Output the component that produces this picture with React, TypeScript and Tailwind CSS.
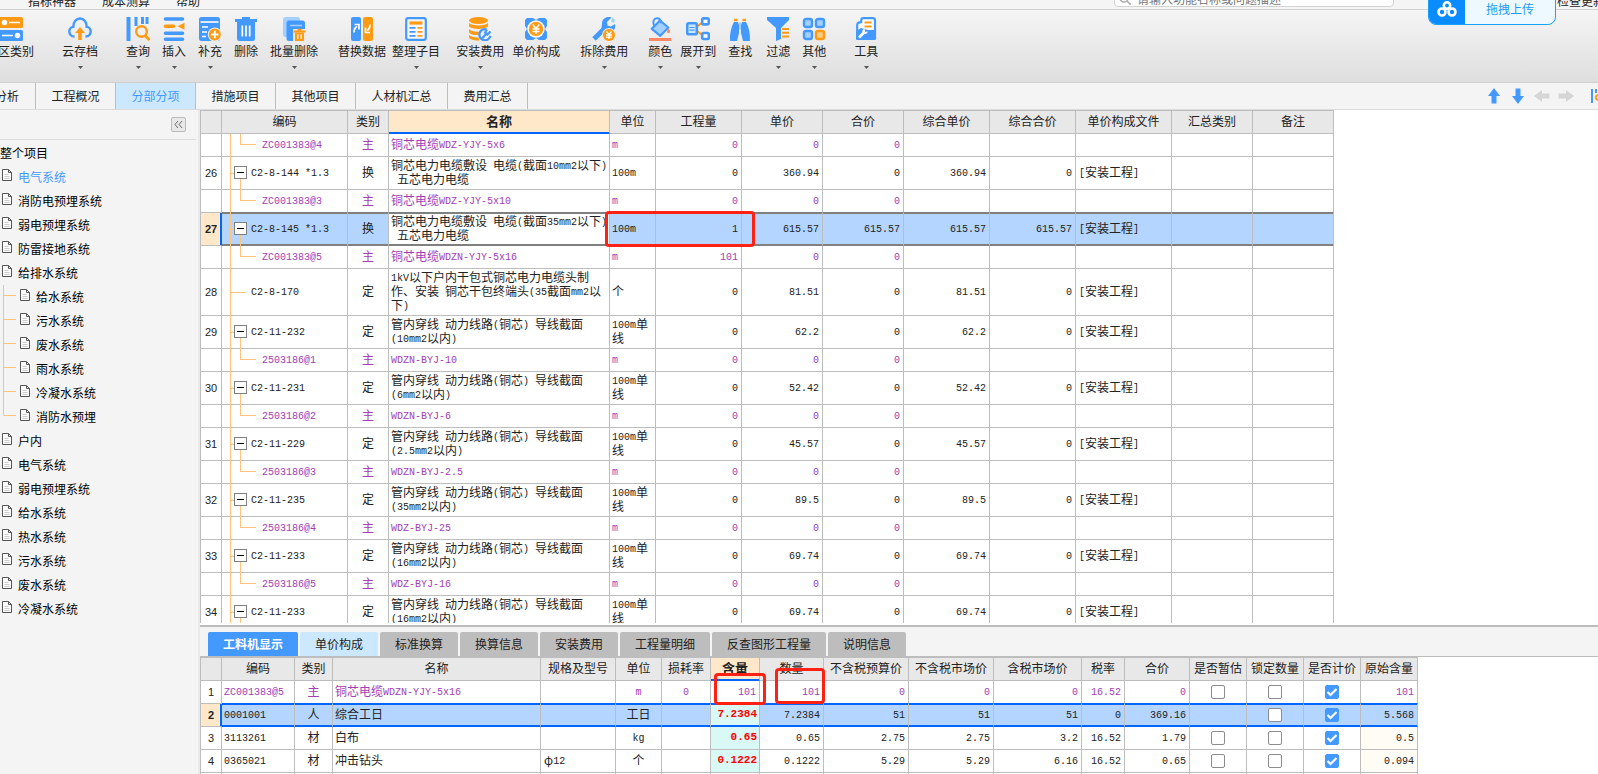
import { ReactNode } from "react"
import clsx from "clsx"

const BLUE = "#4499ff"
const ORANGE = "#ff9a14"

const icons: Record<string, ReactNode> = {
    category: (
        <>
            <rect x="0" y="0" width="24" height="11" rx="1.5" fill={ORANGE} />
            <rect x="0" y="13" width="24" height="11" rx="1.5" fill={BLUE} />
            <circle cx="5.5" cy="5.5" r="2.7" fill="#fff" />
            <circle cx="18.5" cy="18.5" r="2.7" fill="#fff" />
            <path d="M10 5.5h11M3 18.5h11" stroke="#fff" strokeWidth="1.6" />
        </>
    ),
    cloud: (
        <>
            <path d="M6.5 19.5C3 19.5 1.3 17 1.3 14.6c0-2.600 1.900-4.500 4-4.700C5.300 5 8.300 1.500 12 1.500s6.700 3.500 6.700 8.400c2.100.2 4 2.100 4 4.700 0 2.400-1.700 4.900-5.200 4.900" fill="none" stroke={BLUE} strokeWidth="2.400" />
            <path d="M12 10l5 6h-3.200v7h-3.600v-7H7z" fill={ORANGE} />
        </>
    ),
    query: (
        <>
            <path d="M2.500 0v24" stroke={BLUE} strokeWidth="4" />
            <path d="M10 0v9M16.500 0v7M21 0v7" stroke={BLUE} strokeWidth="3" />
            <circle cx="15.500" cy="14.500" r="5.300" fill="#f0f0f0" stroke={ORANGE} strokeWidth="2.400" />
            <path d="M19 18.500l4.500 4.500" stroke={ORANGE} strokeWidth="2.800" />
        </>
    ),
    insert: (
        <>
            <path d="M3.500 2h17M3.500 16.200h17M3.500 22.200h17" stroke={BLUE} strokeWidth="3.600" strokeLinecap="round" />
            <path d="M3.500 9.200h8" stroke={ORANGE} strokeWidth="3.600" strokeLinecap="round" />
            <path d="M22.500 5.700v7l-7-3.500z" fill={ORANGE} />
        </>
    ),
    supply: (
        <>
            <rect x="1" y="0" width="21" height="24" rx="2.500" fill={BLUE} />
            <path d="M2.500 5h18" stroke="#fff" strokeWidth="1.600" />
            <path d="M4 10h6M4 15h5M4 19.500h4" stroke="#fff" strokeWidth="1.600" />
            <circle cx="16.800" cy="17.500" r="7" fill="#ededed" />
            <circle cx="16.800" cy="17.500" r="6" fill={ORANGE} />
            <path d="M16.800 13.800v7.400M13.100 17.500h7.400" stroke="#fff" strokeWidth="1.900" />
        </>
    ),
    trash: (
        <>
            <path d="M1 3.500h22M8 1.200h8" stroke={BLUE} strokeWidth="2.800" />
            <path d="M3 5h18v16.500a2.500 2.500 0 0 1-2.500 2.500h-13A2.500 2.500 0 0 1 3 21.500z" fill={BLUE} />
            <path d="M8.300 8.500v11M12 8.500v11M15.700 8.500v11" stroke="#fff" strokeWidth="1.700" />
        </>
    ),
    batchDelete: (
        <>
            <rect x="1" y="0" width="17" height="20" rx="2.500" fill="#a3d0ff" />
            <rect x="4.500" y="3.500" width="18.500" height="20.500" rx="2.500" fill={BLUE} />
            <path d="M8 8.500h12" stroke="#a3d0ff" strokeWidth="1.500" />
            <path d="M11 12h13v12H11z" fill="#e9e9e9" />
            <path d="M11.500 14.500h12M15.500 12.700h4" stroke={ORANGE} strokeWidth="1.800" />
            <path d="M13 15.500h9V24h-9z" fill={ORANGE} />
            <path d="M15.800 17.300v4.500M19.200 17.300v4.500" stroke="#fff" strokeWidth="1.300" />
        </>
    ),
    replace: (
        <>
            <rect x="1" y="0" width="10" height="24" rx="2" fill={BLUE} />
            <rect x="13" y="0" width="10" height="24" rx="2" fill={ORANGE} />
            <path d="M4 15.500c0-3 1-5 3-6M4.500 7.500h4.500v5" fill="none" stroke="#fff" strokeWidth="1.700" />
            <path d="M20 7.500c0 3-1 5-3 6M15.500 10.500v5H20" fill="none" stroke="#fff" strokeWidth="1.700" />
        </>
    ),
    arrange: (
        <>
            <rect x="2.200" y="1.200" width="19.600" height="21.600" rx="2" fill="#f6f6f6" stroke={BLUE} strokeWidth="2.200" />
            <path d="M5.500 6h13" stroke={ORANGE} strokeWidth="3.200" />
            <path d="M5.500 10.800h6M5.500 14.800h6M5.500 18.800h6" stroke={BLUE} strokeWidth="1.800" />
            <path d="M13.500 10.800h5M13.500 14.800h5M13.500 18.800h5" stroke={ORANGE} strokeWidth="1.800" />
        </>
    ),
    install: (
        <>
            <ellipse cx="10.500" cy="3.500" rx="9.500" ry="3.500" fill={ORANGE} />
            <path d="M1 6c3 3.300 16 3.300 19 0v3.500c-3 3.300-16 3.300-19 0zM1 12c3 3 8 3 11 2.500L11 18c-4 .4-8-.2-10-2.500zM1 18c2.500 2.200 6 2.500 9.500 2.500l1 3C7 23.500 3 23 1 21z" fill={ORANGE} />
            <circle cx="17" cy="17.500" r="6.500" fill="#eee" />
            <path d="M18.500 12.300a5.600 5.600 0 1 0 4 6.500M22.500 14.500l-3 3-2.300-2 1.800-3M18.500 16.500l-4 4.500" fill="none" stroke={BLUE} strokeWidth="2.300" />
        </>
    ),
    price: (
        <>
            <path d="M3 1h6l3 2 3-2h6l2 2v6l-2 3 2 3v6l-2 2h-6l-3-2-3 2H3l-2-2v-6l2-3-2-3V3z" fill={BLUE} />
            <circle cx="12" cy="12" r="8.700" fill="#fff" />
            <circle cx="12" cy="12" r="7.200" fill={ORANGE} />
            <path d="M8.700 7.500l3.300 4 3.300-4M8.500 12h7M8.500 14.500h7M12 11.500v5.500" fill="none" stroke="#fff" strokeWidth="1.500" />
        </>
    ),
    remove: (
        <>
            <path d="M2 22L13 11" stroke={BLUE} strokeWidth="5" />
            <path d="M19.500.6C15-1 10 1.500 10 6.500L9.500 11l5 4.500 2.500-.5c4.500 0 7-3.500 6-8l-4 2.500-3.500-1-.5-3.500z" fill={BLUE} />
            <path d="M20 .8l3 2-1 3-2.800-.8z" fill="#a3d0ff" />
            <circle cx="17" cy="18" r="7" fill="#eaeaea" />
            <circle cx="17" cy="18" r="6" fill={ORANGE} />
            <path d="M14.500 14.500l2.500 3 2.500-3M14 18h6M14 20.200h6M17 17.500v4.500" fill="none" stroke="#fff" strokeWidth="1.300" />
        </>
    ),
    color: (
        <>
            <path d="M12 3.500l8.300 7-8 8.300-8.500-7z" fill="#a3d0ff" stroke={BLUE} strokeWidth="2.200" strokeLinejoin="round" />
            <path d="M6.500 9.500C4 4 6 1.200 9 1.200c2.500 0 4 2.300 4.200 5" fill="none" stroke={BLUE} strokeWidth="1.900" />
            <path d="M20.500 11.500c2 2.400 2 4.700 0 4.700s-2-2.300 0-4.700z" fill="#ff8563" />
            <path d="M1 22.500h22" stroke="#ff8563" strokeWidth="3" />
        </>
    ),
    expand: (
        <>
            <path d="M11 9.500L17 5M11 14l6 4.500" stroke={ORANGE} strokeWidth="2" />
            <rect x="1.200" y="6.200" width="9.600" height="11" rx="1.500" fill="#cfe6ff" stroke={BLUE} strokeWidth="2.600" />
            <rect x="16.200" y="1.400" width="6.600" height="6" rx="1.500" fill="#fff" stroke={BLUE} strokeWidth="2.600" />
            <rect x="16.200" y="16" width="6.600" height="6" rx="1.500" fill="#fff" stroke={BLUE} strokeWidth="2.600" />
            <path d="M3.500 10.500h5M3.500 13.200h5" stroke={BLUE} strokeWidth="1.200" />
        </>
    ),
    find: (
        <>
            <path d="M6 5h4l1 3v8l-2 8H2.200C1.500 18 3 10 6 5zM14 5h4c3 5 4.500 13 3.800 19H15l-2-8V8z" fill={BLUE} />
            <path d="M6 3h3.500M14.500 3H18" stroke={ORANGE} strokeWidth="2.400" />
            <path d="M11 5.500h2v7h-2z" fill="#a3d0ff" />
        </>
    ),
    filter: (
        <>
            <path d="M1 0h22v3l-8 8v11l-5 2V11L1 3z" fill={BLUE} />
            <path d="M16 12h7M16 15.700h7M16 19.400h7" stroke={ORANGE} strokeWidth="2" />
        </>
    ),
    other: (
        <>
            <rect x="2" y="2" width="8" height="8" rx="2" fill="#a3d0ff" stroke={BLUE} strokeWidth="2.400" />
            <rect x="14" y="2" width="8" height="8" rx="2" fill="#a3d0ff" stroke={BLUE} strokeWidth="2.400" />
            <rect x="2" y="14" width="8" height="8" rx="2" fill="#a3d0ff" stroke={BLUE} strokeWidth="2.400" />
            <rect x="14" y="14" width="8" height="8" rx="2" fill="#ffcb86" stroke={ORANGE} strokeWidth="2.400" />
        </>
    ),
    tool: (
        <>
            <path d="M3.200 21V8c0-2 1.800-2.800 4-2.800V3.500c0-1.300 1-2.300 2.300-2.300h9c1.500 0 2.500 1 2.500 2.300V21z" fill="#fff" stroke={BLUE} strokeWidth="2.200" />
            <path d="M10.500 5.500h7M10.500 9.500h7" stroke={ORANGE} strokeWidth="2" />
            <path d="M2 14l5-3 7 2h8v8.500c0 1-.8 1.500-1.500 1.500h-17C2.500 23 2 22.500 2 21.500z" fill={BLUE} />
            <path d="M5 20.500l4.500-4.500" stroke="#fff" strokeWidth="2.600" />
            <path d="M10.500 11.500c-2.500 1-2.800 3.500-1.500 5 1.700 1.300 4 .5 4.700-2l-2.500.5z" fill="#fff" />
        </>
    ),
}

const tools = [
    { label: "云存档", icon: "cloud", gap: "ml-7", arrow: true },
    { label: "查询", icon: "query", gap: "ml-7", arrow: true },
    { label: "插入", icon: "insert", gap: "ml-3", arrow: true },
    { label: "补充", icon: "supply", gap: "ml-3", arrow: true },
    { label: "删除", icon: "trash", gap: "ml-3", arrow: false },
    { label: "批量删除", icon: "batchDelete", gap: "ml-3", arrow: true },
    { label: "替换数据", icon: "replace", gap: "ml-5", arrow: false },
    { label: "整理子目", icon: "arrange", gap: "ml-1.5", arrow: true },
    { label: "安装费用", icon: "install", gap: "ml-4", arrow: true },
    { label: "单价构成", icon: "price", gap: "ml-2", arrow: false },
    { label: "拆除费用", icon: "remove", gap: "ml-5", arrow: true },
    { label: "颜色", icon: "color", gap: "ml-5", arrow: true },
    { label: "展开到", icon: "expand", gap: "ml-2", arrow: true },
    { label: "查找", icon: "find", gap: "ml-3", arrow: false },
    { label: "过滤", icon: "filter", gap: "ml-3.5", arrow: true },
    { label: "其他", icon: "other", gap: "ml-3", arrow: true },
    { label: "工具", icon: "tool", gap: "ml-7", arrow: true },
]

const pageTabs = [
    { label: "工程概况", width: "w-20" },
    { label: "分部分项", width: "w-20" },
    { label: "措施项目", width: "w-20" },
    { label: "其他项目", width: "w-20" },
    { label: "人材机汇总", width: "w-[92px]" },
    { label: "费用汇总", width: "w-20" },
]

const tree = [
    { label: "电气系统", active: true },
    { label: "消防电预埋系统" },
    { label: "弱电预埋系统" },
    { label: "防雷接地系统" },
    { label: "给排水系统", children: ["给水系统", "污水系统", "废水系统", "雨水系统", "冷凝水系统", "消防水预埋"] },
    { label: "户内" },
    { label: "电气系统" },
    { label: "弱电预埋系统" },
    { label: "给水系统" },
    { label: "热水系统" },
    { label: "污水系统" },
    { label: "废水系统" },
    { label: "冷凝水系统" },
]

const mainColumns = [
    { label: "", width: "w-[21px]" },
    { label: "编码", width: "w-[126px]" },
    { label: "类别", width: "w-[41px]" },
    { label: "名称", width: "w-[221px]" },
    { label: "单位", width: "w-[46px]" },
    { label: "工程量", width: "w-[86px]" },
    { label: "单价", width: "w-[81px]" },
    { label: "合价", width: "w-[81px]" },
    { label: "综合单价", width: "w-[86px]" },
    { label: "综合合价", width: "w-[86px]" },
    { label: "单价构成文件", width: "w-24" },
    { label: "汇总类别", width: "w-[81px]" },
    { label: "备注", width: "w-[81px]" },
]

interface MainRow {
    no?: string
    code: string
    type: string
    name: string
    unit: string
    qty: string
    price?: string
    total?: string
    leaf?: boolean
}

const mainRows: MainRow[] = [
    { code: "ZC001383@4", type: "主", name: "铜芯电缆WDZ-YJY-5x6", unit: "m", qty: "0" },
    { no: "26", code: "C2-8-144 *1.3", type: "换", name: "铜芯电力电缆敷设 电缆(截面10mm2以下)\n 五芯电力电缆", unit: "100m", qty: "0", price: "360.94", total: "0" },
    { code: "ZC001383@3", type: "主", name: "铜芯电缆WDZ-YJY-5x10", unit: "m", qty: "0" },
    { no: "27", code: "C2-8-145 *1.3", type: "换", name: "铜芯电力电缆敷设 电缆(截面35mm2以下)\n 五芯电力电缆", unit: "100m", qty: "1", price: "615.57", total: "615.57" },
    { code: "ZC001383@5", type: "主", name: "铜芯电缆WDZN-YJY-5x16", unit: "m", qty: "101" },
    { no: "28", code: "C2-8-170", type: "定", name: "1kV以下户内干包式铜芯电力电缆头制\n作、安装 铜芯干包终端头(35截面mm2以\n下)", unit: "个", qty: "0", price: "81.51", total: "0", leaf: true },
    { no: "29", code: "C2-11-232", type: "定", name: "管内穿线 动力线路(铜芯) 导线截面\n(10mm2以内)", unit: "100m单\n线", qty: "0", price: "62.2", total: "0" },
    { code: "2503186@1", type: "主", name: "WDZN-BYJ-10", unit: "m", qty: "0" },
    { no: "30", code: "C2-11-231", type: "定", name: "管内穿线 动力线路(铜芯) 导线截面\n(6mm2以内)", unit: "100m单\n线", qty: "0", price: "52.42", total: "0" },
    { code: "2503186@2", type: "主", name: "WDZN-BYJ-6", unit: "m", qty: "0" },
    { no: "31", code: "C2-11-229", type: "定", name: "管内穿线 动力线路(铜芯) 导线截面\n(2.5mm2以内)", unit: "100m单\n线", qty: "0", price: "45.57", total: "0" },
    { code: "2503186@3", type: "主", name: "WDZN-BYJ-2.5", unit: "m", qty: "0" },
    { no: "32", code: "C2-11-235", type: "定", name: "管内穿线 动力线路(铜芯) 导线截面\n(35mm2以内)", unit: "100m单\n线", qty: "0", price: "89.5", total: "0" },
    { code: "2503186@4", type: "主", name: "WDZ-BYJ-25", unit: "m", qty: "0" },
    { no: "33", code: "C2-11-233", type: "定", name: "管内穿线 动力线路(铜芯) 导线截面\n(16mm2以内)", unit: "100m单\n线", qty: "0", price: "69.74", total: "0" },
    { code: "2503186@5", type: "主", name: "WDZ-BYJ-16", unit: "m", qty: "0" },
    { no: "34", code: "C2-11-233", type: "定", name: "管内穿线 动力线路(铜芯) 导线截面\n(16mm2以内)", unit: "100m单\n线", qty: "0", price: "69.74", total: "0" },
]

const detailTabs = [
    { label: "工料机显示", style: "w-[90px] bg-[#4499ff] font-bold text-white" },
    { label: "单价构成", style: "w-[78px] bg-[#cce8ff]" },
    { label: "标准换算", style: "w-[78px] bg-[#bdbdbd]" },
    { label: "换算信息", style: "w-[78px] bg-[#bdbdbd]" },
    { label: "安装费用", style: "w-[78px] bg-[#bdbdbd]" },
    { label: "工程量明细", style: "w-[90px] bg-[#bdbdbd]" },
    { label: "反查图形工程量", style: "w-[114px] bg-[#bdbdbd]" },
    { label: "说明信息", style: "w-[78px] bg-[#bdbdbd]" },
]

const detailColumns = [
    { label: "", width: "w-[21px]" },
    { label: "编码", width: "w-[73px]" },
    { label: "类别", width: "w-[38px]" },
    { label: "名称", width: "w-[208px]" },
    { label: "规格及型号", width: "w-[75px]" },
    { label: "单位", width: "w-[46px]" },
    { label: "损耗率", width: "w-[49px]" },
    { label: "含量", width: "w-[49px]" },
    { label: "数量", width: "w-16" },
    { label: "不含税预算价", width: "w-[85px]" },
    { label: "不含税市场价", width: "w-[85px]" },
    { label: "含税市场价", width: "w-[88px]" },
    { label: "税率", width: "w-[43px]" },
    { label: "合价", width: "w-[65px]" },
    { label: "是否暂估", width: "w-[57px]" },
    { label: "锁定数量", width: "w-[57px]" },
    { label: "是否计价", width: "w-[57px]" },
    { label: "原始含量", width: "w-[57px]" },
]

const detailRows = [
    { code: "ZC001383@5", type: "主", name: "铜芯电缆WDZN-YJY-5x16", spec: "", unit: "m", loss: "0", content: "101", qty: "101", budget: "0", market: "0", taxed: "0", rate: "16.52", total: "0", estimate: true, origin: "101" },
    { code: "0001001", type: "人", name: "综合工日", spec: "", unit: "工日", loss: "", content: "7.2384", qty: "7.2384", budget: "51", market: "51", taxed: "51", rate: "0", total: "369.16", estimate: false, origin: "5.568" },
    { code: "3113261", type: "材", name: "白布", spec: "", unit: "kg", loss: "", content: "0.65", qty: "0.65", budget: "2.75", market: "2.75", taxed: "3.2", rate: "16.52", total: "1.79", estimate: true, origin: "0.5" },
    { code: "0365021", type: "材", name: "冲击钻头", spec: "φ12", unit: "个", loss: "", content: "0.1222", qty: "0.1222", budget: "5.29", market: "5.29", taxed: "6.16", rate: "16.52", total: "0.65", estimate: true, origin: "0.094" },
]

// Latin runs are set in the mono face, two of them to one Chinese character
function Mixed({ text }: { text: string }) {
    return (
        <>
            {text.split(/([\x20-\x7e]+)/).map((part, i) =>
                i % 2 ? (
                    <span key={i} className="align-[1px] font-['Liberation_Mono',monospace] text-[10px] leading-2">{part}</span>
                ) : (
                    part
                )
            )}
        </>
    )
}

function FileIcon() {
    return (
        <svg width="10" height="12" viewBox="0 0 10 12" className="mb-1 shrink-0" fill="none">
            <path d="M.5.5h6l3 3v8h-9z" fill="#fff" stroke="#555" />
            <path d="M6.500.5v3h3" stroke="#555" />
            <path d="M2.500 5.500h4M2.500 7.500h5M2.500 9.500h5" stroke="#ccc" />
        </svg>
    )
}

function TopBar() {
    return (
        <div className="flex h-[10px] shrink-0 items-end overflow-hidden border-b border-[#d2d2d2] bg-[#f5f5f5] leading-4">
            <nav className="ml-7 flex items-end gap-[26px]">
                <button className="h-4">指标神器</button>
                <button className="h-4">成本测算</button>
                <button className="h-4">帮助</button>
            </nav>
            <label className="mb-0.5 ml-auto flex h-4 w-[280px] shrink-0 items-center gap-1.5 rounded border border-[#d2d2d2] bg-white pl-1">
                <svg width="12" height="12" viewBox="0 0 12 12" fill="none" stroke="#b0b0b0" strokeWidth="1.600">
                    <circle cx="5" cy="5" r="4" />
                    <path d="M8 8l4 4" />
                </svg>
                <input aria-label="搜索" placeholder="请输入功能名称或问题描述" className="h-4 flex-1 bg-transparent outline-none placeholder:text-[#777]" />
            </label>
            <button className="ml-[163px] h-4 w-[41px] shrink-0 overflow-hidden text-left whitespace-nowrap">检查更新</button>
        </div>
    )
}

function UploadWidget() {
    return (
        <button className="absolute -top-2 right-[42px] flex h-[33px] w-32 overflow-hidden rounded-lg border border-[#14a2f7] bg-[#eef8ff] text-[#1a9df2]">
            <span className="flex h-full w-9 items-center justify-center bg-[#0a8cff]">
                <svg width="20" height="16" viewBox="0 0 20 16" fill="none" stroke="#fff" strokeWidth="2.600">
                    <circle cx="10" cy="4.500" r="3.200" />
                    <circle cx="5" cy="11" r="3.500" />
                    <circle cx="15" cy="11" r="3.500" />
                </svg>
            </span>
            <span className="flex h-full flex-1 items-center justify-center">拖拽上传</span>
        </button>
    )
}

function Toolbar() {
    return (
        <div className="flex h-[73px] shrink-0 items-start overflow-hidden border-b border-[#cfcfcf] bg-linear-to-b from-[#f5f5f5] to-[#dedede] pt-[7px]">
            <button className="flex w-[34px] flex-col items-end">
                <svg width="24" height="24" viewBox="0 0 24 24" className="mr-[11px] shrink-0">{icons.category}</svg>
                <span className="mt-0.5 leading-4 whitespace-nowrap">区类别</span>
            </button>
            {tools.map((tool) => (
                <button key={tool.label} className={clsx("flex shrink-0 flex-col items-center", tool.gap)}>
                    <svg width="24" height="24" viewBox="0 0 24 24">{icons[tool.icon]}</svg>
                    <span className="mt-0.5 leading-4 whitespace-nowrap">{tool.label}</span>
                    {tool.arrow && (
                        <svg width="5" height="3" viewBox="0 0 5 3" className="mt-[7px]">
                            <path d="M0 0h5L2.500 3z" fill="#555" />
                        </svg>
                    )}
                </button>
            ))}
        </div>
    )
}

function PageTabs() {
    return (
        <div className="flex h-[27px] shrink-0 overflow-hidden border-b border-[#dcdcdc] bg-[#f4f4f4]">
            <button className="flex w-9 shrink-0 items-center justify-end border-r border-[#bdbdbd] pr-4 whitespace-nowrap">分析</button>
            {pageTabs.map((tab, i) => (
                <button key={tab.label} className={clsx("shrink-0 border-r border-[#bdbdbd]", tab.width, i === 1 && "bg-[#cce8ff] text-[#4499ff]")}>
                    {tab.label}
                </button>
            ))}
            <div className="ml-auto flex shrink-0 items-center">
                <button aria-label="上移" className="flex w-6 justify-center">
                    <svg width="12" height="16" viewBox="0 0 12 16"><path d="M6 0l6 8H8.500v7.500h-5V8H0z" fill={BLUE} /></svg>
                </button>
                <button aria-label="下移" className="flex w-6 justify-center">
                    <svg width="12" height="16" viewBox="0 0 12 16"><path d="M6 16l6-8H8.500V.5h-5V8H0z" fill={BLUE} /></svg>
                </button>
                <button aria-label="左移" className="flex w-6 justify-center">
                    <svg width="16" height="12" viewBox="0 0 16 12"><path d="M0 6l8-6v3.500h7.500v5H8V12z" fill="#d6d6d6" /></svg>
                </button>
                <button aria-label="右移" className="flex w-6 justify-center">
                    <svg width="16" height="12" viewBox="0 0 16 12"><path d="M16 6L8 0v3.500H.5v5H8V12z" fill="#d6d6d6" /></svg>
                </button>
                <button aria-label="查询" className="ml-3 w-2 overflow-hidden">
                    <svg width="8" height="16" viewBox="0 0 8 16">
                        <path d="M2 1v14M6 1v4" stroke={BLUE} strokeWidth="2" />
                        <path d="M8 7c-3 1-3 4 0 5" stroke={ORANGE} strokeWidth="2" fill="none" />
                    </svg>
                </button>
            </div>
        </div>
    )
}

function ProjectTree() {
    return (
        <aside className="w-[200px] shrink-0 overflow-hidden border-r-2 border-[#e9e9e9] bg-[#f4f4f4] text-black">
            <div className="mr-0.5 flex h-[30px] items-center justify-end border-b border-[#dcdcdc] pr-2.5">
                <button aria-label="收起" className="flex h-[15px] w-[15px] items-center justify-center rounded-xs border border-[#bbb] bg-[#e8e8e8]">
                    <svg width="9" height="7" viewBox="0 0 9 7" fill="none" stroke="#666"><path d="M4 0L1 3.500l3 3.500M8 0L5 3.500 8 7" /></svg>
                </button>
            </div>
            <div className="mt-px h-6 leading-6">整个项目</div>
            <ul>
                {tree.map((node, i) => (
                    <li key={i}>
                        <a href="#" className={clsx("flex h-6 items-center gap-1.5 pl-0.5", node.active && "text-[#4499ff]")}>
                            <FileIcon />
                            {node.label}
                        </a>
                        {node.children && (
                            <ul>
                                {node.children.map((child, j) => (
                                    <li key={child}>
                                        <a href="#" className="flex h-6 items-center gap-1.5">
                                            <svg width="14" height="24" viewBox="0 0 14 24" className="ml-0.5 -mr-0.5 shrink-0" fill="none" stroke="#ffc47a">
                                                <path d={j === node.children.length - 1 ? "M1.500 0v10.500H14" : "M1.500 0v24M1.500 10.500H14"} />
                                            </svg>
                                            <FileIcon />
                                            {child}
                                        </a>
                                    </li>
                                ))}
                            </ul>
                        )}
                    </li>
                ))}
            </ul>
        </aside>
    )
}

function HeaderRow({ columns, active }: { columns: { label: string; width: string }[]; active: string }) {
    return (
        <thead>
            <tr className="h-[23px]">
                {columns.map((col) => (
                    <th
                        key={col.label}
                        className={clsx(
                            "border-r border-b border-[#bdbdbd] p-0 pb-0.5 whitespace-nowrap",
                            col.width,
                            col.label === active
                                ? "border-b-[#0066ff] bg-[#ffe8c9] text-[13px] font-bold shadow-[inset_0_-1px_0_#0066ff]"
                                : "bg-[#e8e8e8] font-normal"
                        )}
                    >
                        {col.label}
                    </th>
                ))}
            </tr>
        </thead>
    )
}

// tree lines and the fold button of the code column
function CodeCell({ row }: { row: MainRow }) {
    if (!row.no) {
        return (
            <div className="pl-10">
                <span className="absolute top-0 -bottom-px left-2 w-px bg-[#ffc47a]" />
                <span className="absolute top-0 bottom-1/2 left-[18px] w-4 border-b border-l border-[#ffc47a]" />
                <Mixed text={row.code} />
            </div>
        )
    }
    return (
        <div className="flex items-center">
            <span className="absolute top-0 -bottom-px left-2 w-px bg-[#ffc47a]" />
            <span className={clsx("absolute top-1/2 left-2 h-px bg-[#ffc47a]", row.leaf ? "w-4" : "w-1")} />
            {!row.leaf && <span className="absolute top-1/2 -bottom-px left-[18px] w-px bg-[#ffc47a]" />}
            {!row.leaf && (
                <button aria-label="折叠" className="relative ml-3 flex h-[13px] w-[13px] items-center justify-center border border-[#808080] bg-white">
                    <span className="h-px w-[7px] bg-black" />
                </button>
            )}
            <span className={row.leaf ? "pl-[29px]" : "pl-1"}>
                <Mixed text={row.code} />
            </span>
        </div>
    )
}

function MainTable() {
    return (
        <div className="relative">
            <table className="w-[1134px] table-fixed border-separate border-spacing-0 border-t border-l border-[#bdbdbd] leading-[14px]">
                <HeaderRow columns={mainColumns} active="名称" />
                <tbody>
                    {mainRows.map((row, i) => {
                        const selected = row.no === "27"
                        const beforeSelected = mainRows[i + 1]?.no === "27"
                        const cell = clsx(
                            "border-r border-b border-r-[#bdbdbd] px-[3px] pt-0 pb-0.5",
                            selected || beforeSelected ? "border-b-[#808080]" : "border-b-[#bdbdbd]",
                            selected && "shadow-[inset_0_-1px_0_#808080,inset_0_1px_0_#808080]"
                        )
                        return (
                            <tr key={i} className={clsx(row.no ? "h-[33px]" : "h-[23px] text-[#a23db5]", selected && "bg-[#b3d5ff]")}>
                                <td
                                    className={clsx(
                                        "border-r border-b border-[#bdbdbd] p-0 text-center font-['Liberation_Sans',sans-serif] text-[11px]",
                                        selected && "border-r-[#0066ff] bg-[#ffe8c9] font-bold shadow-[inset_-1px_0_0_#0066ff]"
                                    )}
                                >
                                    {row.no}
                                </td>
                                <td className={clsx(cell, "relative px-0!")}>
                                    <CodeCell row={row} />
                                </td>
                                <td className={clsx(cell, "text-center", selected && "border-r-[#808080]")}>{row.type}</td>
                                <td className={clsx(cell, "pt-px! pr-0! pb-[3px]! pl-0.5! whitespace-pre", selected && "border-r-[#808080] bg-white")}>
                                    <Mixed text={row.name} />
                                </td>
                                <td className={clsx(cell, "pt-px! pr-0! pb-[3px]! pl-0.5! whitespace-pre")}>
                                    <Mixed text={row.unit} />
                                </td>
                                <td className={clsx(cell, "text-right")}><Mixed text={row.qty} /></td>
                                <td className={clsx(cell, "text-right")}><Mixed text={row.price ?? "0"} /></td>
                                <td className={clsx(cell, "text-right")}><Mixed text={row.total ?? "0"} /></td>
                                <td className={clsx(cell, "text-right")}><Mixed text={row.price ?? ""} /></td>
                                <td className={clsx(cell, "text-right")}><Mixed text={row.total ?? ""} /></td>
                                <td className={cell}>{row.no && <Mixed text="[安装工程]" />}</td>
                                <td className={cell}></td>
                                <td className={clsx(cell, selected && "border-r-[#808080]")}></td>
                            </tr>
                        )
                    })}
                </tbody>
            </table>
            <Mark place="top-[101px] left-[405px] h-9 w-[150px]" />
        </div>
    )
}

function Mark({ place }: { place: string }) {
    return <div className={clsx("pointer-events-none absolute rounded-sm border-3 border-[#ff2114]", place)} />
}

function Check({ label, checked = false }: { label: string; checked?: boolean }) {
    return (
        <span className="relative mx-auto block h-3.5 w-3.5">
            <input
                type="checkbox"
                aria-label={label}
                defaultChecked={checked}
                className="peer block h-3.5 w-3.5 appearance-none rounded-xs border border-[#8c8c8c] bg-white checked:border-[#4499ff] checked:bg-[#4499ff]"
            />
            <svg width="14" height="14" viewBox="0 0 14 14" className="pointer-events-none absolute inset-0 hidden peer-checked:block">
                <path d="M2.500 7l3 3 6-6" fill="none" stroke="#fff" strokeWidth="2.200" />
            </svg>
        </span>
    )
}

function DetailTable() {
    return (
        <div className="relative">
            <table className="w-[1218px] table-fixed border-separate border-spacing-0 border-t border-l border-[#bdbdbd] leading-[14px] whitespace-nowrap">
                <HeaderRow columns={detailColumns} active="含量" />
                <tbody>
                    {detailRows.map((row, i) => {
                        const selected = i === 1
                        const cell = clsx(
                            "border-r border-b border-r-[#bdbdbd] px-[3px] pt-0 pb-0.5",
                            i < 2 ? "border-b-[#0066ff]" : "border-b-[#bdbdbd]",
                            selected && "shadow-[inset_0_-1px_0_#0066ff,inset_0_1px_0_#0066ff]"
                        )
                        return (
                            <tr key={row.code} className={clsx("h-[23px]", i === 0 && "text-[#a23db5]", selected && "bg-[#b3d5ff]")}>
                                <td
                                    className={clsx(
                                        "border-r border-b border-[#bdbdbd] p-0 text-center font-['Liberation_Sans',sans-serif] text-[11px] text-[#222]",
                                        selected && "border-r-[#0066ff] bg-[#ffe8c9] font-bold shadow-[inset_-1px_0_0_#0066ff]"
                                    )}
                                >
                                    {i + 1}
                                </td>
                                <td className={clsx(cell, "pl-0.5!")}><Mixed text={row.code} /></td>
                                <td className={clsx(cell, "text-center")}>{row.type}</td>
                                <td className={clsx(cell, "pl-0.5!")}><Mixed text={row.name} /></td>
                                <td className={cell}><Mixed text={row.spec} /></td>
                                <td className={clsx(cell, "text-center")}><Mixed text={row.unit} /></td>
                                <td className={clsx(cell, "text-center", selected && "border-r-[#0066ff]")}><Mixed text={row.loss} /></td>
                                {i === 0 ? (
                                    <td className={clsx(cell, "text-right")}><Mixed text={row.content} /></td>
                                ) : (
                                    <td
                                        className={clsx(
                                            cell,
                                            "bg-[#d9f9f7] px-0.5! text-right font-['Liberation_Mono',monospace] text-[11px] font-bold text-[#ff0000]",
                                            selected && "border-r-[#0066ff]"
                                        )}
                                    >
                                        {row.content}
                                    </td>
                                )}
                                <td className={clsx(cell, "text-right")}><Mixed text={row.qty} /></td>
                                <td className={clsx(cell, "text-right")}><Mixed text={row.budget} /></td>
                                <td className={clsx(cell, "text-right")}><Mixed text={row.market} /></td>
                                <td className={clsx(cell, "text-right")}><Mixed text={row.taxed} /></td>
                                <td className={clsx(cell, "text-right")}><Mixed text={row.rate} /></td>
                                <td className={clsx(cell, "text-right")}><Mixed text={row.total} /></td>
                                <td className={clsx(cell, "pb-0!")}>{row.estimate && <Check label="是否暂估" />}</td>
                                <td className={clsx(cell, "pb-0!")}><Check label="锁定数量" /></td>
                                <td className={clsx(cell, "pb-0!")}><Check label="是否计价" checked /></td>
                                <td className={clsx(cell, "text-right", selected && "border-r-[#0066ff]", i > 1 && "bg-[#fffbf5]")}>
                                    <Mixed text={row.origin} />
                                </td>
                            </tr>
                        )
                    })}
                    <tr className="h-[23px]">
                        {detailColumns.map((col) => (
                            <td key={col.label} className="border-r border-b border-[#bdbdbd] p-0"></td>
                        ))}
                    </tr>
                </tbody>
            </table>
            <Mark place="top-4 left-[514px] h-8 w-[52px]" />
            <Mark place="top-[11px] left-[575px] h-9 w-[50px]" />
        </div>
    )
}

export default function App() {
    return (
        <div className="relative flex h-screen w-full flex-col overflow-hidden bg-white font-['Noto_Sans_CJK_SC',sans-serif] text-xs text-[#222]">
            <TopBar />
            <Toolbar />
            <PageTabs />
            <div className="flex min-h-0 flex-1">
                <ProjectTree />
                <main className="flex min-w-0 flex-1 flex-col">
                    <div className="min-h-0 flex-1 overflow-hidden">
                        <MainTable />
                    </div>
                    <section className="mt-0.5 h-[149px] shrink-0 overflow-hidden border-t-2 border-[#bdbdbd]">
                        <div className="flex h-[30px] items-end gap-0.5 border-b border-[#bdbdbd] bg-[#f4f4f4] pl-2">
                            {detailTabs.map((tab) => (
                                <button key={tab.label} className={clsx("h-6 shrink-0 rounded-t-xs", tab.style)}>
                                    {tab.label}
                                </button>
                            ))}
                        </div>
                        <DetailTable />
                    </section>
                </main>
            </div>
            <UploadWidget />
        </div>
    )
}
